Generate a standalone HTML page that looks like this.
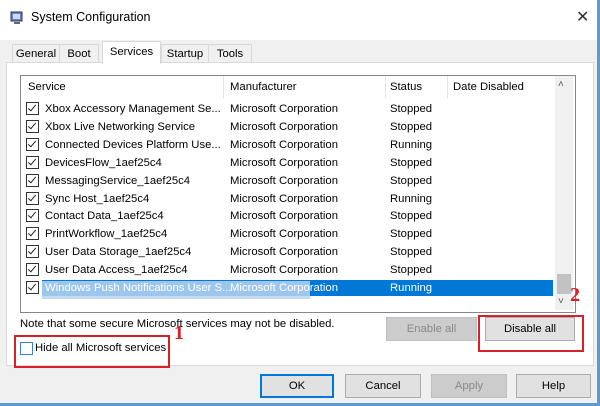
<!DOCTYPE html><html><head><style>
body{margin:0;width:600px;height:406px;overflow:hidden;font-family:"Liberation Sans",sans-serif;font-size:11.3px;color:#000;background:#f0f0f0;position:relative}
.a{position:absolute;white-space:nowrap}
.cb{position:absolute;width:11px;height:11px;border:1px solid #333;background:#fff}
.cb:after{content:"";position:absolute;left:3px;top:0px;width:3px;height:7px;border:solid #222;border-width:0 1.5px 1.5px 0;transform:rotate(40deg)}
.btn{position:absolute;height:22px;border:1px solid #adadad;background:#e1e1e1;text-align:center;line-height:22px}
</style></head><body>
<div class="a" style="left:0;top:0;width:600px;height:40px;background:#fff"></div>
<svg class="a" style="left:9px;top:10px" width="16" height="16"><rect x="2" y="2" width="11" height="9" fill="#6a7fd6" stroke="#334" stroke-width="1"/><rect x="4" y="4" width="7" height="5" fill="#cde"/><rect x="5" y="12" width="6" height="2" fill="#667"/></svg>
<div class="a" style="left:31px;top:10px;font-size:12.5px">System Configuration</div>
<div class="a" style="left:576px;top:7px;font-size:16px;color:#333">✕</div>
<div class="a" style="left:12px;top:44px;width:46px;height:18px;border:1px solid #d9d9d9;border-bottom:none;background:#f0f0f0;line-height:18px;text-align:center">General</div>
<div class="a" style="left:59px;top:44px;width:38px;height:18px;border:1px solid #d9d9d9;border-bottom:none;background:#f0f0f0;line-height:18px;text-align:center">Boot</div>
<div class="a" style="left:161px;top:44px;width:46px;height:18px;border:1px solid #d9d9d9;border-bottom:none;background:#f0f0f0;line-height:18px;text-align:center">Startup</div>
<div class="a" style="left:208px;top:44px;width:42px;height:18px;border:1px solid #d9d9d9;border-bottom:none;background:#f0f0f0;line-height:18px;text-align:center">Tools</div>
<div class="a" style="left:6px;top:62px;width:586px;height:302px;border:1px solid #d9d9d9;background:#fff"></div>
<div class="a" style="left:102px;top:41px;width:57px;height:22px;border:1px solid #d9d9d9;border-bottom:none;background:#fff;line-height:20px;text-align:center">Services</div>
<div class="a" style="left:20px;top:75px;width:554px;height:236px;border:1px solid #828790;background:#fff"></div>
<div class="a" style="left:223px;top:76px;width:1px;height:22px;background:#e5e5e5"></div>
<div class="a" style="left:385px;top:76px;width:1px;height:22px;background:#e5e5e5"></div>
<div class="a" style="left:447px;top:76px;width:1px;height:22px;background:#e5e5e5"></div>
<div class="a" style="left:28px;top:81px">Service</div>
<div class="a" style="left:230px;top:81px">Manufacturer</div>
<div class="a" style="left:390px;top:81px">Status</div>
<div class="a" style="left:453px;top:81px">Date Disabled</div>
<div class="a" style="left:555px;top:76px;width:18px;height:234px;background:#f0f0f0"></div>
<div class="a" style="left:558px;top:79px;font-size:10px;color:#555">˄</div>
<div class="a" style="left:558px;top:296px;font-size:10px;color:#555">˅</div>
<div class="a" style="left:557px;top:274px;width:14px;height:20px;background:#c2c2c2"></div>
<div class="a" style="left:42px;top:280px;width:511px;height:16px;background:#0078d7"></div>
<div class="a" style="left:42px;top:281px;width:268px;height:18px;background:#b9d3f0;opacity:.85"></div>
<div id="rows"></div>
<div class="a" style="left:20px;top:318px">Note that some secure Microsoft services may not be disabled.</div>
<div class="btn" style="left:386px;top:317px;width:89px;color:#8a8a8a;background:#ccc;border-color:#bfbfbf">Enable all</div>
<div class="btn" style="left:485px;top:317px;width:88px">Disable all</div>
<div class="a" style="left:20px;top:342px;width:11px;height:11px;border:1px solid #3c7fd6;background:#fff"></div>
<div class="a" style="left:35px;top:342px">Hide all Microsoft services</div>
<div class="a" style="left:14px;top:335px;width:152px;height:29px;border:2px solid #d9202a"></div>
<div class="a" style="left:478px;top:315px;width:102px;height:33px;border:2px solid #d9202a"></div>
<div class="a" style="left:174px;top:322px;font-family:'Liberation Serif',serif;font-size:20px;color:#d9202a;font-weight:bold">1</div>
<div class="a" style="left:570px;top:284px;font-family:'Liberation Serif',serif;font-size:20px;color:#d9202a;font-weight:bold">2</div>
<div class="btn" style="left:260px;top:374px;width:72px;border:1px solid #0078d7;box-shadow:inset 0 0 0 1px #0078d7">OK</div>
<div class="btn" style="left:345px;top:374px;width:74px">Cancel</div>
<div class="btn" style="left:431px;top:374px;width:74px;color:#8a8a8a;background:#ccc;border-color:#bfbfbf">Apply</div>
<div class="btn" style="left:516px;top:374px;width:73px">Help</div>
<div class="a" style="left:0;top:403px;width:600px;height:3px;background:#5a9bd5"></div>
<div class="a" style="left:597px;top:0;width:3px;height:406px;background:#5a9bd5"></div>
<script>
var r=[["Xbox Accessory Management Se...","Stopped"],["Xbox Live Networking Service","Stopped"],["Connected Devices Platform Use...","Running"],["DevicesFlow_1aef25c4","Stopped"],["MessagingService_1aef25c4","Stopped"],["Sync Host_1aef25c4","Running"],["Contact Data_1aef25c4","Stopped"],["PrintWorkflow_1aef25c4","Stopped"],["User Data Storage_1aef25c4","Stopped"],["User Data Access_1aef25c4","Stopped"],["Windows Push Notifications User S...","Running"]];
var h="";r.forEach(function(x,i){var y=102+i*17.9;var w=i==10;h+='<div class="cb" style="left:26px;top:'+(y)+'px"></div><div class="a" style="left:45px;top:'+(y+1)+'px;'+(w?'color:#fff':'')+'">'+x[0]+'</div><div class="a" style="left:230px;top:'+(y+1)+'px;'+(w?'color:#fff':'')+'">Microsoft Corporation</div><div class="a" style="left:390px;top:'+(y+1)+'px;'+(w?'color:#fff':'')+'">'+x[1]+'</div>';});
document.getElementById("rows").innerHTML=h;
</script>
</body></html>
